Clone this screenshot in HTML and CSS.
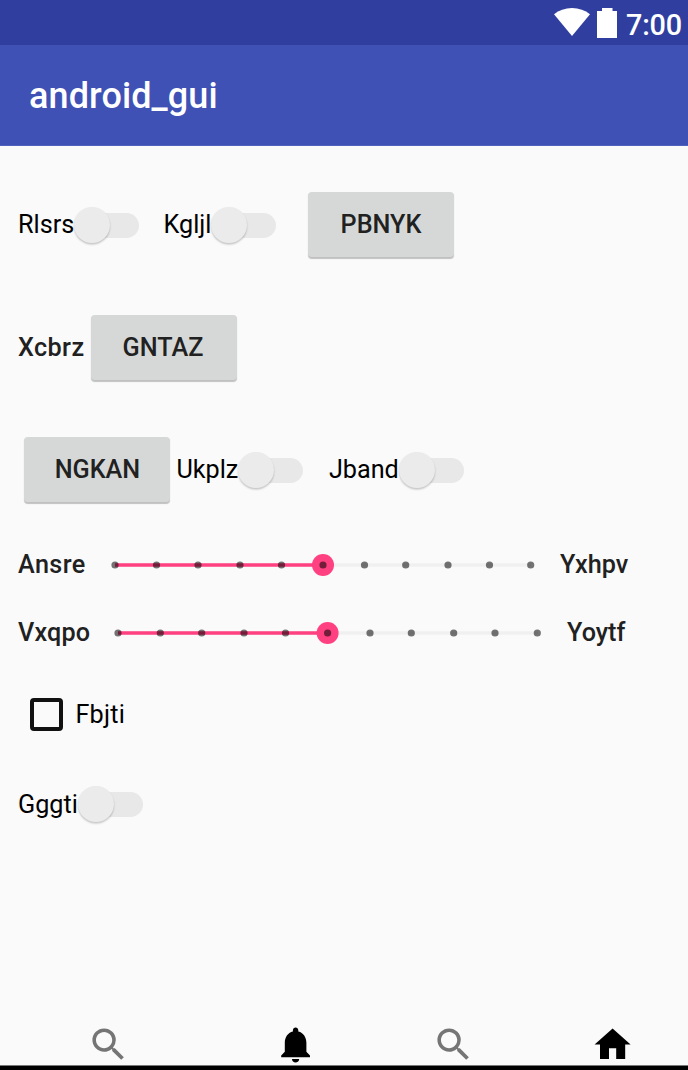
FILE: index.html
```html
<!DOCTYPE html>
<html lang="en">
<head>
<meta charset="utf-8">
<title>android_gui</title>
<link rel="stylesheet" href="styles.css">
</head>
<body>
<div class="screen">
  <div class="status">
    <svg class="wifi" width="36" height="28" viewBox="0 0 36 28"><path d="M0 6.2C5 2.300 11 0 18 0s13 2.300 18 6.200L18 28z"/></svg>
    <svg class="battery" width="20" height="30" viewBox="0 0 20 30"><path d="M5 0h10.500v3H20v27H0V3h5z"/></svg>
    <span class="time">7:00</span>
  </div>
  <header class="appbar"><h1>android_gui</h1></header>
  <main class="content">
    <div class="row tall">
      <label class="toggle w-rlsrs"><span>Rlsrs</span><i class="switch"></i></label>
      <label class="toggle w-kgljl"><span>Kgljl</span><i class="switch"></i></label>
      <button class="btn first-btn">PBNYK</button>
    </div>
    <div class="row tall">
      <span class="text spaced w-xcbrz">Xcbrz</span>
      <button class="btn wide-pad">GNTAZ</button>
    </div>
    <div class="row tall">
      <button class="btn lead-btn">NGKAN</button>
      <label class="toggle w-ukplz"><span>Ukplz</span><i class="switch"></i></label>
      <label class="toggle w-jband"><span>Jband</span><i class="switch"></i></label>
    </div>
    <div class="row slider-row">
      <span class="text spaced w-ansre">Ansre</span>
      <svg class="slider" width="440" height="24" viewBox="0 0 440 24">
        <path class="rail" d="M12 12H428"/><path class="fill" d="M12 12H220"/><circle class="thumb" cx="220" cy="12" r="11"/>
        <g class="ticks"><circle cx="12" cy="12" r="3.600"/><circle cx="53.500" cy="12" r="3.600"/><circle cx="95" cy="12" r="3.600"/><circle cx="137" cy="12" r="3.600"/><circle cx="178.500" cy="12" r="3.600"/><circle cx="220" cy="12" r="3.600"/><circle cx="261.500" cy="12" r="3.600"/><circle cx="302.700" cy="12" r="3.600"/><circle cx="345" cy="12" r="3.600"/><circle cx="386.500" cy="12" r="3.600"/><circle cx="427.700" cy="12" r="3.600"/></g>
      </svg>
      <span class="text end-a">Yxhpv</span>
    </div>
    <div class="row slider-row second">
      <span class="text w-vxqpo">Vxqpo</span>
      <svg class="slider" width="444" height="24" viewBox="0 0 444 24">
        <path class="rail" d="M12 12H432"/><path class="fill" d="M12 12H222"/><circle class="thumb" cx="221.600" cy="12" r="11"/>
        <g class="ticks"><circle cx="12" cy="12" r="3.600"/><circle cx="54.300" cy="12" r="3.600"/><circle cx="95.700" cy="12" r="3.600"/><circle cx="138" cy="12" r="3.600"/><circle cx="179.500" cy="12" r="3.600"/><circle cx="221.600" cy="12" r="3.600"/><circle cx="264" cy="12" r="3.600"/><circle cx="305.300" cy="12" r="3.600"/><circle cx="347.700" cy="12" r="3.600"/><circle cx="389" cy="12" r="3.600"/><circle cx="431.300" cy="12" r="3.600"/></g>
      </svg>
      <span class="text end-b">Yoytf</span>
    </div>
    <div class="row check-row"><label class="check"><i class="box"></i><span>Fbjti</span></label></div>
    <div class="row last-row"><label class="toggle w-gggti"><span>Gggti</span><i class="switch"></i></label></div>
  </main>
  <nav class="nav">
    <svg class="gray" viewBox="0 0 24 24"><path d="M15.500 14h-.79l-.28-.27A6.471 6.471 0 0 0 16 9.500 6.500 6.500 0 1 0 9.500 16c1.610 0 3.090-.59 4.230-1.570l.27.28v.79l5 4.990L20.490 19l-4.990-5zm-6 0C7.010 14 5 11.990 5 9.500S7.010 5 9.500 5 14 7.010 14 9.500 11.990 14 9.500 14z"/></svg>
    <svg class="bell" viewBox="0 0 24 24"><path d="M12 22c1.100 0 2-.9 2-2h-4c0 1.100.89 2 2 2zm6-6v-5c0-3.070-1.640-5.640-4.500-6.320V4c0-.83-.67-1.500-1.500-1.500s-1.500.67-1.500 1.500v.68C7.630 5.360 6 7.920 6 11v5l-2 2v1h16v-1l-2-2z"/></svg>
    <svg class="gray search-two" viewBox="0 0 24 24"><path d="M15.500 14h-.79l-.28-.27A6.471 6.471 0 0 0 16 9.500 6.500 6.500 0 1 0 9.500 16c1.610 0 3.090-.59 4.230-1.570l.27.28v.79l5 4.990L20.490 19l-4.990-5zm-6 0C7.010 14 5 11.990 5 9.500S7.010 5 9.500 5 14 7.010 14 9.500 11.990 14 9.500 14z"/></svg>
    <svg class="home" viewBox="0 0 24 24"><path d="M10 20v-6h4v6h5v-8h3L12 3 2 12h3v8z"/></svg>
  </nav>
  <div class="edge"></div>
</div>
</body>
</html>
```
FILE: styles.css
```css
* { box-sizing: border-box; }
body { margin: 0; font-family: Roboto, sans-serif; font-size: 25.2px; color: #000; }
.screen { width: 688px; height: 1070px; display: flex; flex-direction: column; background: #fafafa; overflow: hidden; }
.status { height: 45px; flex: none; background: #303f9f; color: #fff; display: flex; justify-content: flex-end; align-items: flex-start; padding: 8px 6px 0 0; }
.status svg { fill: #fff; flex: none; }
.wifi { margin-right: 6.500px; }
.battery { margin-right: 9.500px; }
.time { width: 56px; font-size: 28.800px; line-height: 34px; font-weight: 500; white-space: nowrap; letter-spacing: -.2px; }
.appbar { height: 101px; flex: none; background: #3f51b5; border-bottom: 1px solid #5162bc; display: flex; align-items: center; padding: 2px 0 0 29px; }
h1 { margin: 0; color: #fff; font-size: 36px; font-weight: 500; line-height: 42px; letter-spacing: .1px; white-space: nowrap; }
.content { flex: 1; min-height: 0; padding: 17.600px 0 0 18px; }
.row { display: flex; align-items: center; white-space: nowrap; }
.tall { height: 122.400px; }
.toggle { display: flex; align-items: center; justify-content: space-between; flex: none; }
.switch { position: relative; width: 65px; height: 36px; flex: none; }
.switch::before { content: ""; position: absolute; left: 12px; top: 6px; width: 53px; height: 25px; border-radius: 13px; background: #e8e8e8; }
.switch::after { content: ""; position: absolute; left: 0; top: 0; width: 36px; height: 36px; border-radius: 50%; background: #ebebeb; box-shadow: 0 1.500px 2px rgba(0,0,0,.22); }
.w-rlsrs { width: 120px; }
.w-kgljl { width: 112.400px; margin-left: 25.500px; }
.w-ukplz { width: 126.500px; margin-left: 6px; }
.w-jband { width: 134.300px; margin-left: 26px; }
.w-gggti { width: 123.400px; }
.btn { width: 146px; height: 65px; flex: none; padding: 0; border: 0; border-radius: 4px; background: #d6d8d7; color: #212121; font: 500 25.200px Roboto, sans-serif; box-shadow: 0 1.500px 1px rgba(0,0,0,.23); }
.first-btn { margin-left: 32.100px; }
.lead-btn { margin-left: 6.400px; }
.wide-pad { padding-right: 2px; }
.text { color: #212121; font-weight: 500; flex: none; }
.spaced { letter-spacing: .4px; }
.w-xcbrz { width: 73px; }
.slider-row { height: 68.400px; }
.slider-row .text { padding-bottom: 1px; }
.slider { flex: none; }
.w-ansre { width: 85px; }
.w-vxqpo { width: 88.400px; letter-spacing: .15px; }
.end-a { margin-left: 17px; }
.end-b { margin-left: 16.700px; }
.rail { stroke: #f0f0f0; stroke-width: 3.600; }
.fill { stroke: #ff4081; stroke-width: 3.600; }
.thumb { fill: #ff4081; }
.ticks { fill: #000; opacity: .54; }
.check-row { height: 94px; }
.check { display: flex; align-items: center; gap: 12.500px; margin-left: 12px; letter-spacing: .2px; }
.box { width: 33px; height: 33px; border: 4px solid #111; border-radius: 4px; }
.last-row { height: 85px; }
.nav { height: 43px; flex: none; display: flex; padding-left: 86.700px; }
.nav svg { width: 43.200px; height: 43.200px; flex: none; overflow: visible; margin-top: .6px; }
.gray { fill: #757575; }
.bell { margin-left: 143.700px; }
.search-two { margin-left: 115.500px; }
.home { margin-left: 115.300px; }
.edge { height: 5px; flex: none; background: #000; border-top: 1px solid #777; }
```
